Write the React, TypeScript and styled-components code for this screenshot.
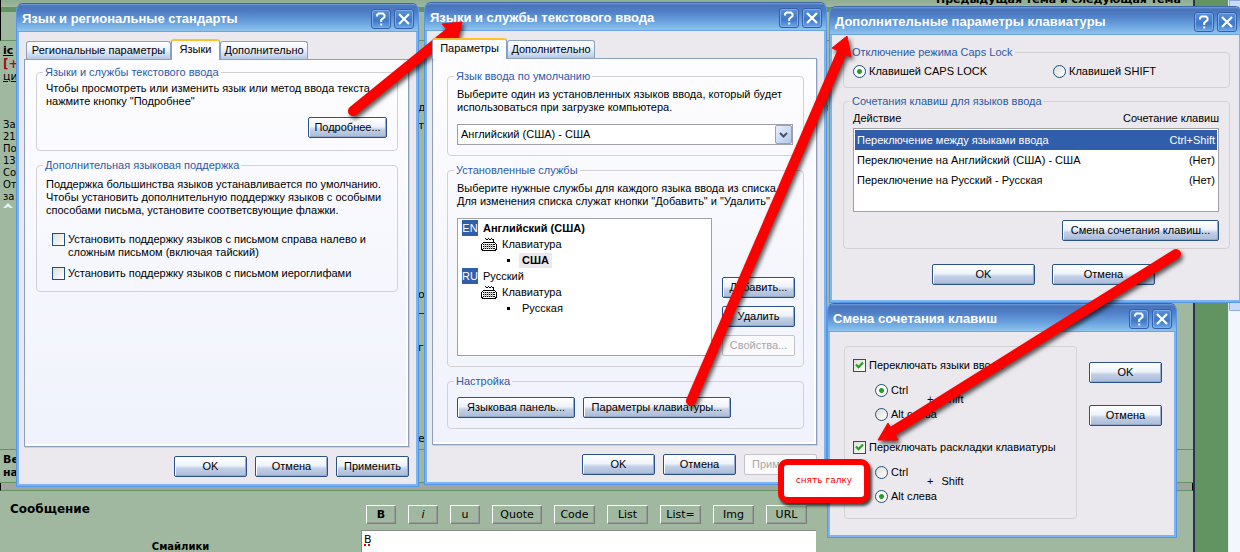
import React from "react";
import styled, { createGlobalStyle, css } from "styled-components";

const GlobalStyle = createGlobalStyle`
  * { box-sizing: border-box; }
  body {
    margin: 0;
    overflow: hidden;
    font-family: "Liberation Sans", Arial, sans-serif;
    font-size: 11px;
    line-height: 13px;
    color: #000;
  }
`;

const forumFont = `"DejaVu Sans", Verdana, sans-serif`;

/* ---------- forum page ---------- */

const Desktop = styled.div`
  position: relative;
  min-height: 100vh;
  overflow: hidden;
`;

const Page = styled.div`
  display: grid;
  grid-template-columns: 1fr 33px 12px;
  min-height: 100vh;
  background: #629462;
`;

const Forum = styled.main`
  display: flex;
  flex-direction: column;
  min-width: 0;
  background: #a0b8a0;
  border-right: 2px solid #2d3052;
  font-family: ${forumFont};
`;

const Gutter = styled.div`
  background: #629462;
`;

const ScrollTrack = styled.div`
  display: flex;
  flex-direction: column;
  background: #f4f6fd;
  border-left: 1px solid #e4e8f4;
`;

const ScrollThumb = styled.div`
  height: 311px;
  border: 1px solid #8faad6;
  border-right: 0;
  border-radius: 0 0 0 2px;
  background: #c8dafa;
`;

const TopicNav = styled.header`
  display: flex;
  flex-direction: column;
  justify-content: flex-end;
  align-items: flex-end;
  height: 7px;
  padding-right: 12px;
  border-left: 1px solid #000;
  background: linear-gradient(#8fae8f, #a0b8a0);
  font-size: 11px;
  font-weight: bold;
  line-height: 14px;
`;

const Stripe = styled.div`
  height: 5px;
  border-left: 1px solid #000;
  background: #629462;
`;

const HeadRow = styled.div`
  height: 29px;
  border-left: 1px solid #000;
  border-bottom: 1px solid #629462;
`;

const PostRow = styled.section`
  display: flex;
  height: 409px;
  padding-left: 3px;
  border-bottom: 1px solid #629462;
`;

const Author = styled.aside`
  display: flex;
  flex-direction: column;
  width: 415px;
  padding-top: 4px;
`;

const AuthorLink = styled.a`
  color: #000;
  font-size: 11px;
  line-height: 12px;
`;

const AuthorName = styled(AuthorLink)`
  font-weight: bold;
`;

const Karma = styled.strong`
  color: #a01010;
  font-size: 12px;
  line-height: 14px;
`;

const AuthorStats = styled.div`
  padding-top: 36px;
  font-size: 10px;
  line-height: 12px;
`;

const UpIcon = styled.svg`
  width: 10px;
  height: 6px;
`;

const PostBody = styled.div`
  display: flex;
  flex-direction: column;
  padding-top: 58px;
  font-size: 11px;
  line-height: 18px;
`;

const PostLine = styled.div<{ $space?: number }>`
  display: flex;
  justify-content: space-between;
  width: 410px;
  padding-top: ${(p) => p.$space ?? 0}px;
`;

const Moderation = styled.div`
  height: 33px;
  padding: 3px;
  border-bottom: 1px solid #629462;
  font-size: 11px;
  font-weight: bold;
  line-height: 13px;
`;

const Band = styled.div`
  height: 8px;
  background: #a0a5a0;
  border-left: 1px solid #000;
  border-right: 1px solid #000;
  border-bottom: 1px solid #629462;
`;

const Reply = styled.form`
  display: grid;
  grid-template-columns: 361px 455px;
  grid-template-rows: 39px 1fr;
  flex: 1;
`;

const ReplyLabel = styled.label`
  padding: 9px 10px;
  font-size: 12px;
  font-weight: bold;
  line-height: 18px;
`;

const Smileys = styled.div`
  padding-top: 10px;
  text-align: center;
  font-size: 10px;
  font-weight: bold;
`;

const Toolbar = styled.div`
  display: flex;
  align-items: flex-start;
  gap: 12px;
  padding: 14px 5px;
`;

const CodeButton = styled.button<{ $w: number }>`
  width: ${(p) => p.$w}px;
  height: 19px;
  flex: none;
  padding: 0;
  border: 1px solid;
  border-color: #fff #7d7a80 #7d7a80 #fff;
  background: #a0b8a0;
  box-shadow: inset -1px -1px #9a9a9c;
  font: 11px/17px ${forumFont};
`;

const Message = styled.textarea`
  border: 1px solid #8a8a8a;
  border-width: 1px 0 0 1px;
  padding: 2px;
  resize: none;
  outline: none;
  background: #fff;
  font: 11px/14px ${forumFont};
  text-decoration: underline dotted #e00000 2px;
`;

/* ---------- windows ---------- */

const Win = styled.section<{ $x: number; $y: number; $w: number; $h: number }>`
  position: absolute;
  left: ${(p) => p.$x}px;
  top: ${(p) => p.$y}px;
  display: flex;
  flex-direction: column;
  width: ${(p) => p.$w}px;
  min-height: ${(p) => p.$h}px;
  border: 1px solid #5596e6;
  border-top-color: #3d68a8;
  border-radius: 7px 7px 0 0;
  background: #7cb4f0;
`;

const TitleBar = styled.header`
  display: flex;
  align-items: center;
  gap: 3px;
  height: 28px;
  padding: 2px 4px 0 5px;
  border-radius: 6px 6px 0 0;
  border-bottom: 1px solid #6ba3e6;
  background: linear-gradient(#6fa0e0 0, #4a73b8 2px, #5080c8 9px, #6ba4e0 19px, #90c4ec 27px);
`;

const Title = styled.h2`
  flex: 1;
  margin: 0;
  color: #fff;
  font-size: 13px;
  font-weight: bold;
  line-height: 16px;
  white-space: nowrap;
`;

const TitleButton = styled.button`
  display: grid;
  place-items: center;
  width: 20px;
  height: 20px;
  flex: none;
  padding: 0;
  border: 1px solid #3560a8;
  border-radius: 3px;
  background: linear-gradient(#5a90d8, #3f78c8 60%, #6ba8e4);
  box-shadow: inset 0 0 0 1px #78acec;
`;

const WinBody = styled.div<{ $pad?: string }>`
  display: flex;
  flex-direction: column;
  flex: 1;
  margin: 0 2px 2px;
  padding: ${(p) => p.$pad ?? "7px 7px 7px 5px"};
  background: #ebe9ed;
`;

const TabList = styled.div<{ $inset?: number }>`
  display: flex;
  align-items: flex-end;
  height: 20px;
  padding-left: ${(p) => p.$inset ?? 0}px;
`;

const Tab = styled.button<{ $w: number; $active?: boolean }>`
  width: ${(p) => p.$w}px;
  height: 18px;
  padding: 0;
  border: 1px solid #8ba0bc;
  border-bottom: 0;
  border-radius: 3px 3px 0 0;
  background: linear-gradient(#fff, #e8f0fc 50%, #b4c8e4);
  font: inherit;
  color: #000;
  white-space: nowrap;
  ${(p) =>
    p.$active &&
    css`
      height: 21px;
      margin-bottom: -1px;
      padding-bottom: 2px;
      border-top: 2px solid #ffc030;
      background: #fdfdff;
      z-index: 1;
    `}
`;

const TabPanel = styled.div<{ $pad: string }>`
  display: flex;
  flex-direction: column;
  gap: 8px;
  flex: 1;
  margin-bottom: 9px;
  padding: ${(p) => p.$pad};
  border: 1px solid #8ba0bc;
  background: linear-gradient(#fdfdff, #f0f2fc);
  box-shadow: inset -2px -2px #fff, 1px 1px #cfd0da;
`;

const Group = styled.fieldset<{ $h: number; $top?: number }>`
  display: flex;
  flex-direction: column;
  min-width: 0;
  min-height: ${(p) => p.$h}px;
  margin: 0;
  padding: ${(p) => p.$top ?? 3}px 10px 0 9px;
  border: 1px solid #d2d2d6;
  border-radius: 4px;
`;

const Legend = styled.legend`
  margin-left: -3px;
  padding: 0 2px;
  color: #2c5aa8;
  line-height: 13px;
`;

const Text = styled.p`
  margin: 0;
  white-space: nowrap;
`;

const Button = styled.button<{ $w: number }>`
  width: ${(p) => p.$w}px;
  height: 21px;
  flex: none;
  padding: 0;
  border: 1px solid #2a5288;
  border-radius: 2px;
  background: linear-gradient(#fff, #eef3fb 45%, #c3d0e6 60%, #a9bbd8);
  box-shadow: inset 1px 1px #fff, inset -1px -1px #93a9cc;
  font: inherit;
  color: #000;
  white-space: nowrap;
  &:disabled {
    border-color: #c4c4c8;
    background: #fafafc;
    box-shadow: none;
    color: #a8a8ac;
  }
`;

const Row = styled.div<{ $gap?: number; $end?: boolean; $top?: number; $right?: number }>`
  display: flex;
  gap: ${(p) => p.$gap ?? 8}px;
  justify-content: ${(p) => (p.$end ? "flex-end" : "flex-start")};
  padding-top: ${(p) => p.$top ?? 0}px;
  padding-right: ${(p) => p.$right ?? 0}px;
`;

const Groups = styled.div`
  display: flex;
  flex-direction: column;
  gap: 7px;
`;

const ToggleLabel = styled.label`
  display: flex;
  gap: 3px;
  white-space: nowrap;
`;

const Check = styled.input.attrs({ type: "checkbox" })`
  appearance: none;
  width: 13px;
  height: 13px;
  flex: none;
  margin: 0;
  border: 1px solid #1c5180;
  background: linear-gradient(135deg, #dcdcd7, #fff);
`;

const CheckMark = styled.span`
  display: grid;
  height: 13px;
  & > * {
    grid-area: 1 / 1;
  }
  svg {
    display: none;
    pointer-events: none;
  }
  input:checked + svg {
    display: block;
  }
`;

const Radio = styled.input.attrs({ type: "radio" })`
  appearance: none;
  width: 13px;
  height: 13px;
  flex: none;
  margin: 0;
  border: 1px solid #1c5180;
  border-radius: 50%;
  background: linear-gradient(135deg, #dcdcd7, #fff);
  &:checked {
    background: radial-gradient(circle, #21a121 0 2px, #fff 3px);
  }
`;

const Options = styled.div`
  display: flex;
  flex-direction: column;
  gap: 8px;
  padding: 16px 6px 0;
`;

const SelectBox = styled.div`
  display: grid;
  width: 336px;
  height: 21px;
  margin-top: 10px;
  border: 1px solid #a0a0a6;
  background: #fff;
  & > * {
    grid-area: 1 / 1;
  }
`;

const Select = styled.select`
  appearance: none;
  width: 100%;
  padding: 0 3px;
  border: 0;
  outline: none;
  background: transparent;
  font: inherit;
  color: #000;
`;

const DropIcon = styled.span`
  display: grid;
  place-items: center;
  justify-self: end;
  width: 17px;
  pointer-events: none;
  border: 1px solid #8ba4cc;
  border-radius: 2px;
  background: linear-gradient(135deg, #e8f0fe, #b4c8ec);
`;

const Services = styled.div`
  display: flex;
  gap: 10px;
  margin-top: 10px;
`;

const ServiceList = styled.ul`
  flex: none;
  width: 255px;
  height: 138px;
  margin: 0;
  padding: 1px 4px;
  border: 1px solid #a0a0a6;
  background: #fff;
  list-style: none;
`;

const Service = styled.li<{ $indent?: number; $gap?: number; $bold?: boolean }>`
  display: flex;
  align-items: center;
  gap: ${(p) => p.$gap ?? 5}px;
  height: 16px;
  padding-left: ${(p) => p.$indent ?? 0}px;
  font-weight: ${(p) => (p.$bold ? "bold" : "normal")};
`;

const LangBadge = styled.span`
  width: 16px;
  text-align: center;
  background: #315eab;
  color: #fff;
  font-weight: normal;
  line-height: 16px;
`;

const Dot = styled.span`
  width: 3px;
  height: 3px;
  background: #000;
`;

const Layout = styled.span<{ $active?: boolean }>`
  padding: 0 3px;
  line-height: 15px;
  background: ${(p) => (p.$active ? "#ebe9ed" : "transparent")};
`;

const ServiceButtons = styled.div`
  display: flex;
  flex-direction: column;
  justify-content: flex-end;
  gap: 8px;
`;

const KeyTable = styled.table`
  border-spacing: 0;
  td {
    height: 20px;
    padding: 0 2px;
  }
  td:last-child {
    text-align: right;
  }
`;

const KeyRow = styled.tr<{ $selected?: boolean }>`
  td {
    background: ${(p) => (p.$selected ? "#315eab" : "#fff")};
    color: ${(p) => (p.$selected ? "#fff" : "#000")};
  }
`;

const KeyListBox = styled.div`
  height: 84px;
  padding: 1px;
  border: 1px solid #a0a0a6;
  background: #fff;
  table {
    width: 100%;
  }
`;

const KeyHead = styled.div`
  display: flex;
  justify-content: space-between;
  padding: 1px 0 3px;
  line-height: 13px;
`;

const HotkeyBox = styled.div`
  display: flex;
  flex-direction: column;
  gap: 12px;
  width: 233px;
  min-height: 173px;
  padding: 12px 8px;
  border: 1px solid #d2d2d6;
  border-radius: 4px;
`;

const Combo = styled.div`
  display: flex;
  align-items: center;
  padding-left: 22px;
  & + label {
    margin-top: 8px;
  }
`;

const ComboKeys = styled.div`
  display: flex;
  flex-direction: column;
  gap: 11px;
  width: 52px;
`;

const ComboSuffix = styled.div`
  display: flex;
  gap: 8px;
  padding-bottom: 7px;
`;

const SideButtons = styled.div`
  display: flex;
  flex-direction: column;
  gap: 22px;
  padding-top: 16px;
`;

/* ---------- annotations ---------- */

const Arrows = styled.svg`
  position: absolute;
  left: 0;
  top: 0;
  pointer-events: none;
  filter: drop-shadow(2px 3px 2px rgba(0, 0, 0, 0.65));
`;

const Callout = styled.div`
  position: absolute;
  left: 778px;
  top: 459px;
  width: 92px;
  padding: 9px 0 10px;
  border: 6px solid #f00;
  border-radius: 9px;
  background: #fff;
  box-shadow: 2px 3px 3px rgba(0, 0, 0, 0.7);
  color: #f00;
  text-align: center;
  font: 9px/13px ${forumFont};
`;

const HelpIcon = () => (
  <svg width="14" height="16" viewBox="0 0 14 16" fill="none" stroke="#fff" strokeWidth="2">
    <path d="M3 5.5V4L4.500 2.500H9L10.500 4V6L7.200 9V11" />
    <path d="M7.200 12.500V14.500" />
  </svg>
);

const CloseIcon = () => (
  <svg width="14" height="14" viewBox="0 0 14 14" stroke="#fff" strokeWidth="2.2">
    <path d="M2 2L12 12M12 2L2 12" />
  </svg>
);

const KeyboardIcon = () => (
  <svg width="16" height="14" viewBox="0 0 16 14" shapeRendering="crispEdges">
    <path d="M4 1h1v1h1v1h-1v-1h-1zM7 1h1v1h1v1h-1v-1h-1zM10 1h1v1h1v1h-1v-1h-1zM6 2h1v1h-1zM9 2h1v1h-1zM12 2h1v3h-1z" fill="#000" />
    <path d="M2 5h12v1h1v1h1v6h-1v1H1v-1H0V7h1V6h1z" fill="#000" />
    <path d="M2 6h12v1H2zM1 7h1v5H1zM14 7h1v5h-1zM2 12h12v1H2zM2 8h12v1H2zM2 10h12v1H2z" fill="#fff" />
    <path d="M3 7h1v5H3zM5 7h1v5H5zM7 7h1v5H7zM9 7h1v5H9zM11 7h1v5h-1z" fill="#bbb" />
  </svg>
);

const Tick = () => (
  <svg width="13" height="13" viewBox="0 0 13 13" fill="none" stroke="#21a121" strokeWidth="2.2">
    <path d="M3 5.500L5.500 8.200L10 3.500" />
  </svg>
);

type WindowProps = {
  title: string;
  x: number;
  y: number;
  w: number;
  h: number;
  pad?: string;
  children: React.ReactNode;
};

const DialogWindow = ({ title, x, y, w, h, pad, children }: WindowProps) => (
  <Win $x={x} $y={y} $w={w} $h={h} aria-label={title}>
    <TitleBar>
      <Title>{title}</Title>
      <TitleButton type="button">
        <HelpIcon />
      </TitleButton>
      <TitleButton type="button">
        <CloseIcon />
      </TitleButton>
    </TitleBar>
    <WinBody $pad={pad}>{children}</WinBody>
  </Win>
);

const CheckOption = ({ checked, children }: { checked?: boolean; children: React.ReactNode }) => (
  <ToggleLabel>
    <CheckMark>
      <Check defaultChecked={checked} />
      <Tick />
    </CheckMark>
    <span>{children}</span>
  </ToggleLabel>
);

const RadioOption = ({ name, checked, children }: { name: string; checked?: boolean; children: React.ReactNode }) => (
  <ToggleLabel>
    <Radio name={name} defaultChecked={checked} />
    <span>{children}</span>
  </ToggleLabel>
);

const shortcuts = [
  ["Переключение между языками ввода", "Ctrl+Shift"],
  ["Переключение на Английский (США) - США", "(Нет)"],
  ["Переключение на Русский - Русская", "(Нет)"],
];

const codes: [string, number][] = [
  ["Quote", 50],
  ["Code", 41],
  ["List", 41],
  ["List=", 41],
  ["Img", 41],
  ["URL", 41],
];

const ForumPage = () => (
  <Page>
    <Forum>
      <TopicNav>
        <span>Предыдущая тема и следующая тема</span>
      </TopicNav>
      <Stripe />
      <HeadRow />
      <PostRow>
        <Author>
          <AuthorName href="#author">ic</AuthorName>
          <Karma>[+</Karma>
          <AuthorLink href="#quote">ци</AuthorLink>
          <AuthorStats>
            За<br />21<br />По<br />13<br />Со<br />От<br />за
          </AuthorStats>
          <UpIcon viewBox="0 0 10 6">
            <path d="M0 5L5 0L10 5L7 5L5 3.500L3 5z" fill="#dff6fa" />
          </UpIcon>
        </Author>
        <PostBody>
          <PostLine>
            <span>д</span>
            <span>я</span>
          </PostLine>
          <PostLine>т</PostLine>
          <PostLine $space={151}>о</PostLine>
          <PostLine>—</PostLine>
          <PostLine $space={17}>г</PostLine>
          <PostLine $space={73}>е</PostLine>
        </PostBody>
      </PostRow>
      <Moderation>
        Ве
        <br />
        на
      </Moderation>
      <Band />
      <Reply>
        <ReplyLabel htmlFor="message">Сообщение</ReplyLabel>
        <Toolbar>
          <CodeButton type="button" $w={30}>
            <b>B</b>
          </CodeButton>
          <CodeButton type="button" $w={30}>
            <i>i</i>
          </CodeButton>
          <CodeButton type="button" $w={30}>
            u
          </CodeButton>
          {codes.map(([label, w]) => (
            <CodeButton type="button" key={label} $w={w}>
              {label}
            </CodeButton>
          ))}
        </Toolbar>
        <Smileys>Смайлики</Smileys>
        <Message id="message" defaultValue="В" spellCheck={false} />
      </Reply>
    </Forum>
    <Gutter />
    <ScrollTrack>
      <ScrollThumb />
    </ScrollTrack>
  </Page>
);

const RegionalWindow = () => (
  <DialogWindow title="Язык и региональные стандарты" x={16} y={3} w={403} h={484}>
    <TabList $inset={2}>
      <Tab $w={145} type="button">Региональные параметры</Tab>
      <Tab $w={49} $active type="button">Языки</Tab>
      <Tab $w={88} type="button">Дополнительно</Tab>
    </TabList>
    <TabPanel $pad="6px 10px 6px 11px">
      <Group $h={85}>
        <Legend>Языки и службы текстового ввода</Legend>
        <Text>
          Чтобы просмотреть или изменить язык или метод ввода текста,
          <br />
          нажмите кнопку "Подробнее"
        </Text>
        <Row $end $top={9}>
          <Button type="button" $w={79}>Подробнее...</Button>
        </Row>
      </Group>
      <Group $h={133} $top={6}>
        <Legend>Дополнительная языковая поддержка</Legend>
        <Text>
          Поддержка большинства языков устанавливается по умолчанию.
          <br />
          Чтобы установить дополнительную поддержку языков с особыми
          <br />
          способами письма, установите соответсвующие флажки.
        </Text>
        <Options>
          <CheckOption>
            Установить поддержку языков с письмом справа налево и
            <br />
            сложным письмом (включая тайский)
          </CheckOption>
          <CheckOption>Установить поддержку языков с письмом иероглифами</CheckOption>
        </Options>
      </Group>
    </TabPanel>
    <Row $end>
      <Button type="button" $w={73}>OK</Button>
      <Button type="button" $w={73}>Отмена</Button>
      <Button type="button" $w={73}>Применить</Button>
    </Row>
  </DialogWindow>
);

const ServicesWindow = () => (
  <DialogWindow title="Языки и службы текстового ввода" x={424} y={2} w={403} h={483}>
    <TabList>
      <Tab $w={75} $active type="button">Параметры</Tab>
      <Tab $w={88} type="button">Дополнительно</Tab>
    </TabList>
    <TabPanel $pad="11px 12px 12px 14px">
      <Group $h={86} $top={5}>
        <Legend>Язык ввода по умолчанию</Legend>
        <Text>
          Выберите один из установленных языков ввода, который будет
          <br />
          использоваться при загрузке компьютера.
        </Text>
        <SelectBox>
          <Select aria-label="Язык ввода по умолчанию">
            <option>Английский (США) - США</option>
          </Select>
          <DropIcon>
            <svg width="9" height="6" viewBox="0 0 9 6" fill="none" stroke="#45526c" strokeWidth="2">
              <path d="M1 1L4.500 4.500L8 1" />
            </svg>
          </DropIcon>
        </SelectBox>
      </Group>
      <Group $h={203} $top={5}>
        <Legend>Установленные службы</Legend>
        <Text>
          Выберите нужные службы для каждого языка ввода из списка.
          <br />
          Для изменения списка служат кнопки "Добавить" и "Удалить".
        </Text>
        <Services>
          <ServiceList>
            <Service $bold>
              <LangBadge>EN</LangBadge>Английский (США)
            </Service>
            <Service $indent={19}>
              <KeyboardIcon />Клавиатура
            </Service>
            <Service $indent={45} $gap={9} $bold>
              <Dot />
              <Layout $active>США</Layout>
            </Service>
            <Service>
              <LangBadge>RU</LangBadge>Русский
            </Service>
            <Service $indent={19}>
              <KeyboardIcon />Клавиатура
            </Service>
            <Service $indent={45} $gap={9}>
              <Dot />
              <Layout>Русская</Layout>
            </Service>
          </ServiceList>
          <ServiceButtons>
            <Button type="button" $w={73}>Добавить...</Button>
            <Button type="button" $w={73}>Удалить</Button>
            <Button type="button" $w={73} disabled>Свойства...</Button>
          </ServiceButtons>
        </Services>
      </Group>
      <Group $h={54} $top={9}>
        <Legend>Настройка</Legend>
        <Row>
          <Button type="button" $w={118}>Языковая панель...</Button>
          <Button type="button" $w={148}>Параметры клавиатуры...</Button>
        </Row>
      </Group>
    </TabPanel>
    <Row $end>
      <Button type="button" $w={73}>OK</Button>
      <Button type="button" $w={73}>Отмена</Button>
      <Button type="button" $w={73} disabled>Применить</Button>
    </Row>
  </DialogWindow>
);

const KeyboardWindow = () => (
  <DialogWindow title="Дополнительные параметры клавиатуры" x={829} y={6} w={413} h={297} pad="11px 9px 14px 11px">
    <Groups>
      <Group $h={42} $top={6}>
        <Legend>Отключение режима Caps Lock</Legend>
        <Row $gap={66}>
          <RadioOption name="caps" checked>Клавишей CAPS LOCK</RadioOption>
          <RadioOption name="caps">Клавишей SHIFT</RadioOption>
        </Row>
      </Group>
      <Group $h={154}>
        <Legend>Сочетания клавиш для языков ввода</Legend>
        <KeyHead>
          <span>Действие</span>
          <span>Сочетание клавиш</span>
        </KeyHead>
        <KeyListBox>
          <KeyTable>
            <tbody>
              {shortcuts.map(([action, keys], i) => (
                <KeyRow key={action} $selected={i === 0}>
                  <td>{action}</td>
                  <td>{keys}</td>
                </KeyRow>
              ))}
            </tbody>
          </KeyTable>
        </KeyListBox>
        <Row $end $top={8}>
          <Button type="button" $w={157}>Смена сочетания клавиш...</Button>
        </Row>
      </Group>
    </Groups>
    <Row $gap={17} $end $top={15} $right={75}>
      <Button type="button" $w={103}>OK</Button>
      <Button type="button" $w={103}>Отмена</Button>
    </Row>
  </DialogWindow>
);

const HotkeyWindow = () => (
  <DialogWindow title="Смена сочетания клавиш" x={827} y={303} w={350} h={235} pad="14px 11px 14px 14px">
    <Row $gap={12}>
      <HotkeyBox>
        <CheckOption checked>Переключать языки ввода</CheckOption>
        <Combo>
          <ComboKeys>
            <RadioOption name="language" checked>Ctrl</RadioOption>
            <RadioOption name="language">Alt слева</RadioOption>
          </ComboKeys>
          <ComboSuffix>
            <span>+</span>
            <span>Shift</span>
          </ComboSuffix>
        </Combo>
        <CheckOption checked>Переключать раскладки клавиатуры</CheckOption>
        <Combo>
          <ComboKeys>
            <RadioOption name="layout">Ctrl</RadioOption>
            <RadioOption name="layout" checked>Alt слева</RadioOption>
          </ComboKeys>
          <ComboSuffix>
            <span>+</span>
            <span>Shift</span>
          </ComboSuffix>
        </Combo>
      </HotkeyBox>
      <SideButtons>
        <Button type="button" $w={73}>OK</Button>
        <Button type="button" $w={73}>Отмена</Button>
      </SideButtons>
    </Row>
  </DialogWindow>
);

const App = () => (
  <>
    <GlobalStyle />
    <Desktop>
      <ForumPage />
      <RegionalWindow />
      <ServicesWindow />
      <KeyboardWindow />
      <HotkeyWindow />
      <Arrows width="1240" height="552" viewBox="0 0 1240 552" fill="#f00" stroke="#f00">
        <path d="M353 111L449 33M691 401L842 52M1176 254L893 431" strokeWidth="10" strokeLinecap="round" />
        <path d="M462 22L442 24L457 41zM847 36L832 48L851 57zM878 440L888 423L898 440z" />
      </Arrows>
      <Callout>снять галку</Callout>
    </Desktop>
  </>
);

export default App;
